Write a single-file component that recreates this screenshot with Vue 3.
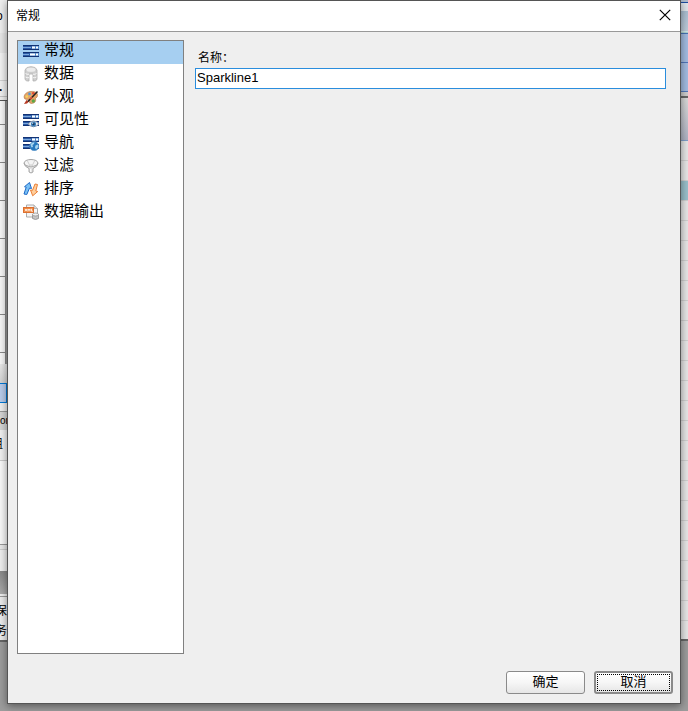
<script setup>
import { ref, nextTick } from 'vue'

const pages = [
  { id: 'general', label: '常规' },
  { id: 'data', label: '数据' },
  { id: 'look', label: '外观' },
  { id: 'visibility', label: '可见性' },
  { id: 'navigation', label: '导航' },
  { id: 'filter', label: '过滤' },
  { id: 'sort', label: '排序' },
  { id: 'output', label: '数据输出' }
]
const current = ref('general')
const name = ref('Sparkline1')
const open = ref(true)

async function close() {
  open.value = false
  await nextTick()
}
</script>

<template>
  <div class="desktop">
    <div class="behind left" aria-hidden="true">
      <div class="l-title">o</div>
      <div class="l-tools"></div>
      <div class="l-dots">.</div>
      <div class="l-gap"></div>
      <div class="l-grid"><i v-for="n in 7" :key="n"></i></div>
      <div class="l-fade"></div>
      <div class="l-select"></div>
      <div class="l-line"></div>
      <div class="l-head">or</div>
      <div class="l-group"><span>组</span></div>
      <div class="l-pane"></div>
      <div class="l-foot"></div>
      <div class="l-dark"></div>
      <div class="l-text"><span>保</span></div>
      <div class="l-text last"><span>务</span></div>
    </div>

    <main v-if="open" class="dialog" role="dialog" aria-labelledby="dlg-title">
      <header class="titlebar">
        <h1 id="dlg-title">常规</h1>
        <button class="close" type="button" aria-label="关闭" @click="close">
          <svg width="12" height="12" viewBox="0 0 12 12"><path d="M.8 .8 11.2 11.2M11.2 .8 .8 11.2" stroke="#000" stroke-width="1.2" /></svg>
        </button>
      </header>

      <div class="body">
        <nav class="pages">
          <button
            v-for="p in pages"
            :key="p.id"
            type="button"
            class="page"
            :class="{ active: current === p.id }"
            @click="current = p.id"
          >
            <svg class="icon" width="16" height="16" viewBox="0 0 16 16">
              <g v-if="['general', 'visibility', 'navigation'].includes(p.id)">
                <path d="M0 2H9V7H0ZM0 9H7V14H0Z" fill="#2d5ca6" />
                <path d="M0 2.500H16M0 6.500H16M0 9.500H16M0 13.500H16" stroke="#123273" />
                <path d="M9 3H16V6H9ZM7 10H16V13H7Z" fill="#4f86c8" />
                <path d="M9 4.500H12M13 4.500H15M7 11.500H12M13 11.500H15" stroke="#fff" stroke-width="2" />
                <path d="M0 4.500H8M0 11.500H6" stroke="#7fa9dc" />
              </g>
              <g v-if="p.id === 'visibility'">
                <path d="M5 12Q10.500 6 16 12Q10.500 17.500 5 12Z" fill="#f3f5f8" stroke="#8795aa" />
                <circle cx="10.500" cy="12" r="2.600" fill="#3e83bd" />
                <circle cx="10.500" cy="12" r="1.200" fill="#12365d" />
                <circle cx="9.700" cy="11.200" r=".6" fill="#fff" />
              </g>
              <g v-if="p.id === 'navigation'">
                <circle cx="11.300" cy="11.200" r="4.600" fill="#2578be" stroke="#6a9fce" stroke-width=".6" />
                <path d="M7.500 9.500Q9 7 11.500 7.200L11 9 9.500 10 10 12 8.500 12.500ZM12.500 10.500 15 9.500 15.300 12 13 14.500 12 12.500Z" fill="#a5d4ef" />
              </g>
              <g v-if="p.id === 'data'">
                <path d="M2 4V13.500Q3.500 15.500 6 15V8H10V15Q12.500 15.500 14 13.500V4Q13 .7 8 .7T2 4Z" fill="#cfcfcf" stroke="#b0b0b0" stroke-width=".8" />
                <ellipse cx="8" cy="3.800" rx="5" ry="2.500" fill="#ececec" stroke="#c2c2c2" stroke-width=".6" />
                <path d="M2.500 7.500Q4 8.700 6 8.300M2.500 11Q4 12 6 11.700M10 8.300Q12 8.700 13.500 7.500M10 11.700Q12 12 13.500 11" fill="none" stroke="#f6f6f6" />
              </g>
              <g v-if="p.id === 'look'">
                <path d="M1 8Q1.500 3.500 7 2.500Q13.500 1.800 14.500 5.500Q15 8 12.500 9.500Q13.500 14 8.500 14.500Q6 14.500 6.500 12Q6.500 10.500 4.500 10.500Q1 10.700 1 8Z" fill="#e5a469" stroke="#b27343" stroke-width=".6" />
                <circle cx="3.800" cy="7.500" r="1.300" fill="#f4d45a" />
                <circle cx="6.500" cy="4.900" r="1.300" fill="#4f96d8" />
                <circle cx="10.300" cy="4.300" r="1.300" fill="#e04a36" />
                <circle cx="10.300" cy="12" r="1.700" fill="#5aa847" />
                <path d="M1 15 3.500 11 6 12.500 4 14.500Z" fill="#b63a24" />
                <path d="M5 12.500 14.500 2.500" stroke="#222" stroke-width="1.500" />
                <path d="M7 10.300 9 8.200" stroke="#e34c30" stroke-width="1.500" />
              </g>
              <g v-if="p.id === 'filter'">
                <path d="M1 5.500Q1.500 8.500 6 10.500V14Q8 16 10 14V10.500Q14.500 8.500 15 5.500Z" fill="#e2e2e2" stroke="#969696" stroke-width=".8" />
                <ellipse cx="8" cy="5" rx="6.900" ry="3.500" fill="#f4f4f4" stroke="#9b9b9b" stroke-width=".9" />
                <path d="M4.500 3 7.500 9M11.500 3 8.500 9M8 6V10" stroke="#c4c4c4" stroke-width=".8" />
                <path d="M7.700 11V14" stroke="#fff" />
              </g>
              <g v-if="p.id === 'sort'">
                <path d="M1 13 3.200 6.200 1.500 5.700 6.500 1.500 8.500 7.500 6.500 7.100 3.800 13.500Z" fill="#79c0f5" stroke="#1f6bc8" />
                <path d="M14.500 3.500 12.800 10 14.700 10.500 9.700 14.800 7.500 9 9.500 9.300 12 3Z" fill="#ffcf9c" stroke="#ea8038" />
              </g>
              <g v-if="p.id === 'output'">
                <path d="M3.500 1H11L14.500 4.500V13H3.500Z" fill="#f5f5f5" stroke="#aaa" />
                <path d="M11 1V4.500H14.500" fill="#ddd" stroke="#aaa" stroke-width=".8" />
                <rect x=".5" y="3.500" width="10" height="5" fill="#ef8c46" stroke="#dd7030" />
                <path d="M2 5 4 7.200M4 5 2 7.200M5 7.300V5L6 6.300 7 5V7.300M8.500 4.800V7.200H10" fill="none" stroke="#fff" stroke-width=".8" />
                <path d="M9.500 10.500V14.500Q12.500 16.500 15.500 14.500V10.500Z" fill="#c5c5c5" stroke="#8d8d8d" stroke-width=".8" />
                <ellipse cx="12.500" cy="10.500" rx="3" ry="1.500" fill="#f0f0f0" stroke="#929292" stroke-width=".8" />
              </g>
            </svg>
            <span>{{ p.label }}</span>
          </button>
        </nav>

        <section class="content">
          <label for="item-name">名称：</label>
          <input id="item-name" v-model="name" type="text" spellcheck="false" />
        </section>
      </div>

      <footer class="actions">
        <button type="button" class="btn" @click="close"><span>确定</span></button>
        <button type="button" class="btn focused" @click="close"><span>取消</span></button>
      </footer>
    </main>

    <div class="behind right" aria-hidden="true">
      <div class="r-text"></div>
      <div class="r-ribbon"></div>
      <div class="r-blue"></div>
      <div class="r-blue"></div>
      <div class="r-gap"></div>
      <div class="r-head"></div>
      <div class="r-row"></div>
      <div class="r-row"></div>
      <div class="r-row picked"></div>
      <div v-for="n in 22" :key="n" class="r-row"></div>
    </div>
  </div>
</template>

<style>
body {
  margin: 0;
}
</style>

<style scoped>
* {
  box-sizing: border-box;
}
.desktop {
  display: flex;
  min-height: 100vh;
  background: #9c9c9c;
  font-family: "Liberation Sans", "Noto Sans CJK SC", sans-serif;
  color: #000;
  overflow: hidden;
}
.behind {
  flex: none;
  width: 7px;
  overflow: hidden;
  font-size: 12px;
}
.left span {
  float: right;
}
.l-title {
  height: 33px;
  padding-top: 9px;
  line-height: 14px;
  background: #eee;
  text-indent: -4px;
}
.l-tools {
  height: 48px;
  background: linear-gradient(#e6e6e6 20px, #f2f2f2 20px);
  border-bottom: 1px solid #d0d0d0;
}
.l-dots {
  height: 16px;
  background: #f0f0f0;
  font-weight: bold;
  line-height: 12px;
  text-indent: -1px;
  border-bottom: 1px solid #c4c4c4;
}
.l-gap {
  height: 4px;
  background: #eee;
  border-bottom: 1px solid #555;
}
.l-grid {
  width: 6px;
  height: 263px;
  background: #f6f6f6;
  border-right: 1px solid #888;
}
.l-grid i {
  display: block;
  height: 38px;
  border-bottom: 1px solid #888;
}
.l-grid i:first-child {
  height: 24px;
}
.l-fade {
  height: 19px;
  background: linear-gradient(#e8e8e8, #d2d2d2);
}
.l-select {
  height: 20px;
  background: #b8cbea;
  border: 1px solid #0078d7;
  border-left: 0;
}
.l-line {
  height: 9px;
  background: #eee;
  border-bottom: 1px solid #999;
}
.l-head {
  height: 18px;
  background: #d4d4d4;
  font-size: 10px;
  line-height: 18px;
}
.l-group {
  height: 31px;
  background: #f0f0f0;
  line-height: 28px;
  border-bottom: 1px solid #c8c8c8;
}
.left .l-group span {
  padding-right: 4px;
}
.l-pane {
  height: 84px;
  background: #f8f8f8;
  border-bottom: 1px solid #999;
}
.l-foot {
  height: 26px;
  background: linear-gradient(#e8e8e8 4px, #ccc 4px, #ccc 5px, #eee 5px);
}
.l-dark {
  height: 26px;
  background: linear-gradient(#888, #aaa 23px, #eee 23px, #eee 25px, #999 25px);
}
.l-text {
  height: 24px;
  padding-top: 4px;
  line-height: 20px;
  background: #ececec;
}
.l-text.last {
  height: 21px;
  padding-top: 0;
  border-bottom: 2px solid #666;
}

.dialog {
  flex: 1;
  min-width: 0;
  display: flex;
  flex-direction: column;
  margin-bottom: 7px;
  background: #efefef;
  border: 1px solid #555;
  box-shadow: 0 2px 8px rgba(0, 0, 0, 0.45);
  position: relative;
}
.titlebar {
  display: flex;
  align-items: center;
  justify-content: space-between;
  height: 31px;
  padding: 0 8px;
  background: #fff;
  border-bottom: 1px solid #999;
}
h1 {
  margin: 0;
  font-size: 12px;
  font-weight: 400;
  line-height: 16px;
}
.close {
  display: flex;
  padding: 1px 1px 3px;
  border: 0;
  background: none;
}
.body {
  flex: 1;
  display: flex;
  gap: 11px;
  padding: 8px 14px 0 9px;
}
.pages {
  flex: none;
  width: 167px;
  background: #fff;
  border: 1px solid #808080;
}
.page {
  display: flex;
  gap: 5px;
  width: 100%;
  height: 23px;
  padding: 0 5px;
  border: 0;
  background: none;
  color: #000;
  font: 15px/16px "Noto Sans CJK SC", sans-serif;
  text-align: left;
}
.page.active {
  background: #a6cff1;
}
.icon {
  flex: none;
  margin-top: 2px;
}
.content {
  flex: 1;
  min-width: 0;
  display: flex;
  flex-direction: column;
  padding-top: 8px;
}
label {
  padding-left: 3px;
  font-size: 12px;
  line-height: 20px;
}
input {
  width: 100%;
  height: 21px;
  padding: 0 1px 2px;
  border: 1px solid #2a8ddd;
  background: #fff;
  color: #000;
  font: 13px/18px "Liberation Sans", sans-serif;
  outline: 0;
}
.actions {
  display: flex;
  justify-content: flex-end;
  gap: 9px;
  padding: 17px 7px 9px;
}
.btn {
  display: flex;
  flex-direction: column;
  width: 79px;
  height: 23px;
  padding: 0;
  border: 1px solid #8a8a8a;
  border-radius: 3px;
  background: linear-gradient(#fff, #f6f6f6 50%, #e6e6e6);
  color: #000;
  font: 13px/17px "Noto Sans CJK SC", sans-serif;
}
.btn span {
  display: block;
  align-self: stretch;
}
.btn.focused {
  border-width: 2px;
}
.btn.focused span {
  height: 17px;
  margin: 1px;
  line-height: 12px;
  border: 1px dotted #000;
}

.r-text {
  height: 11px;
  background: linear-gradient(#aebccd 2px, #1c4da0 2px, #1c4da0 3px, #dfe5ea 3px);
}
.r-ribbon {
  height: 23px;
  background: linear-gradient(#a9bdd0, #bccbd9 20px, #e0f0f0 20px, #9cc8c8 22px, #4773b5 22px);
}
.r-blue {
  height: 29px;
  background: #a2bbe0;
  border-bottom: 1px solid #5075b8;
}
.r-gap {
  height: 6px;
  background: #ccc;
  border-bottom: 2px solid #666;
}
.r-head {
  height: 43px;
  background: linear-gradient(#d8d8d8, #aeb2c2);
  border-bottom: 1px solid #7f9ec8;
}
.r-row {
  height: 20px;
  background: #e6e6e6;
  border-bottom: 1px solid #d0d0d0;
}
.r-row.picked {
  background: #99bfca;
}
.r-row:last-child {
  border-bottom: 2px solid #666;
}
</style>
